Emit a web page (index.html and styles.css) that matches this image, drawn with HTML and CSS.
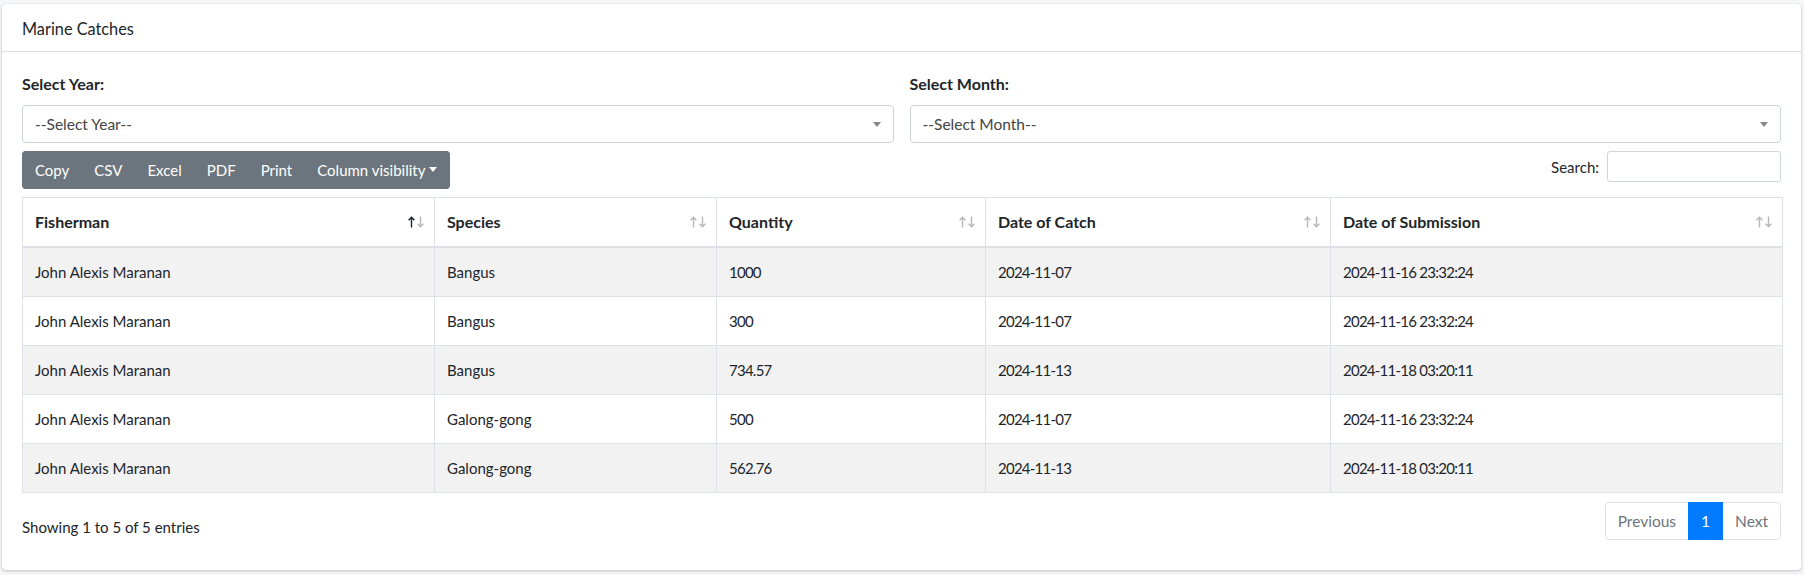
FILE: index.html
```html
<!DOCTYPE html>
<html lang="en">
<head>
<meta charset="utf-8">
<title>Marine Catches</title>
<link rel="stylesheet" href="styles.css">
</head>
<body>
<div class="card">
  <div class="card-header">
    <h3 class="card-title">Marine Catches</h3>
  </div>
  <div class="card-body">
    <div class="filters">
      <div class="field">
        <label class="field-label">Select Year:</label>
        <div class="select"><span class="select-text">--Select Year--</span><span class="select-arrow"></span></div>
      </div>
      <div class="field">
        <label class="field-label">Select Month:</label>
        <div class="select"><span class="select-text">--Select Month--</span><span class="select-arrow"></span></div>
      </div>
    </div>
    <div class="toolbar">
      <div class="btn-group">
        <button class="btn">Copy</button>
        <button class="btn">CSV</button>
        <button class="btn">Excel</button>
        <button class="btn">PDF</button>
        <button class="btn">Print</button>
        <button class="btn dropdown-toggle">Column visibility</button>
      </div>
      <label class="search">Search:<input class="search-input" type="search"></label>
    </div>
    <table class="data-table">
      <colgroup>
        <col class="c1"><col class="c2"><col class="c3"><col class="c4"><col class="c5">
      </colgroup>
      <thead>
        <tr>
          <th>Fisherman<svg class="sort" width="17" height="12" viewBox="0 0 17 12"><path class="up active" d="M3.5 11.5V1.2M0.6 4.3L3.5 1.2L6.4 4.3"/><path class="down" d="M12.5 0.5V10.8M9.6 7.7L12.5 10.8L15.4 7.7"/></svg></th>
          <th>Species<svg class="sort" width="17" height="12" viewBox="0 0 17 12"><path class="up" d="M3.5 11.5V1.2M0.6 4.3L3.5 1.2L6.4 4.3"/><path class="down" d="M12.5 0.5V10.8M9.6 7.7L12.5 10.8L15.4 7.7"/></svg></th>
          <th>Quantity<svg class="sort" width="17" height="12" viewBox="0 0 17 12"><path class="up" d="M3.5 11.5V1.2M0.6 4.3L3.5 1.2L6.4 4.3"/><path class="down" d="M12.5 0.5V10.8M9.6 7.7L12.5 10.8L15.4 7.7"/></svg></th>
          <th>Date of Catch<svg class="sort" width="17" height="12" viewBox="0 0 17 12"><path class="up" d="M3.5 11.5V1.2M0.6 4.3L3.5 1.2L6.4 4.3"/><path class="down" d="M12.5 0.5V10.8M9.6 7.7L12.5 10.8L15.4 7.7"/></svg></th>
          <th>Date of Submission<svg class="sort" width="17" height="12" viewBox="0 0 17 12"><path class="up" d="M3.5 11.5V1.2M0.6 4.3L3.5 1.2L6.4 4.3"/><path class="down" d="M12.5 0.5V10.8M9.6 7.7L12.5 10.8L15.4 7.7"/></svg></th>
        </tr>
      </thead>
      <tbody>
        <tr class="odd"><td>John Alexis Maranan</td><td>Bangus</td><td class="num">1000</td><td class="num">2024-11-07</td><td class="num">2024-11-16 23:32:24</td></tr>
        <tr><td>John Alexis Maranan</td><td>Bangus</td><td class="num">300</td><td class="num">2024-11-07</td><td class="num">2024-11-16 23:32:24</td></tr>
        <tr class="odd"><td>John Alexis Maranan</td><td>Bangus</td><td class="num">734.57</td><td class="num">2024-11-13</td><td class="num">2024-11-18 03:20:11</td></tr>
        <tr><td>John Alexis Maranan</td><td>Galong-gong</td><td class="num">500</td><td class="num">2024-11-07</td><td class="num">2024-11-16 23:32:24</td></tr>
        <tr class="odd"><td>John Alexis Maranan</td><td>Galong-gong</td><td class="num">562.76</td><td class="num">2024-11-13</td><td class="num">2024-11-18 03:20:11</td></tr>
      </tbody>
    </table>
    <div class="table-footer">
      <div class="info">Showing 1 to 5 of 5 entries</div>
      <ul class="pagination">
        <li class="page-item disabled"><span class="page-link">Previous</span></li>
        <li class="page-item active"><span class="page-link">1</span></li>
        <li class="page-item disabled"><span class="page-link">Next</span></li>
      </ul>
    </div>
  </div>
</div>
</body>
</html>
```

FILE: styles.css
```css
* { box-sizing: border-box; }

html, body {
  margin: 0;
  padding: 0;
}

body {
  background: #f4f6f9;
  font-family: "Lato", "Liberation Sans", sans-serif;
  font-size: 15px;
  line-height: 24px;
  color: #212529;
}

.card {
  margin: 4px 3px 5px 2px;
  background: #fff;
  border-radius: 4px;
  box-shadow: 0 0 1px rgba(0,0,0,.125), 0 1px 3px rgba(0,0,0,.2);
}

.card-header {
  padding: 12px 20px;
  border-bottom: 1px solid rgba(0,0,0,.125);
}

.card-title {
  margin: 0;
  font-size: 16.3px;
  line-height: 23px;
  font-weight: 400;
  padding-top: 1px;
  margin-bottom: -1px;
}

.card-body {
  padding: 20px 20px 20px;
}

.filters {
  display: grid;
  grid-template-columns: 1fr 1fr;
  column-gap: 16px;
  margin-bottom: 8px;
}

.field-label {
  display: block;
  font-size: 16px;
  font-weight: 700;
  margin-bottom: 9px;
}

.select {
  position: relative;
  height: 38px;
  border: 1px solid #ced4da;
  border-radius: 4px;
  background: #fff;
  display: flex;
  align-items: center;
  padding: 0 12px;
}

.select-text {
  color: #444;
  font-size: 15.5px;
}

.select-arrow {
  position: absolute;
  right: 12px;
  top: 16px;
  width: 0;
  height: 0;
  border-style: solid;
  border-width: 5px 4px 0 4px;
  border-color: #888 transparent transparent transparent;
}

.toolbar {
  display: flex;
  justify-content: space-between;
  align-items: flex-start;
  margin-bottom: 8px;
}

.btn-group {
  display: flex;
  background: #6c757d;
  border-radius: 4px;
}

.btn {
  font-family: inherit;
  font-size: 15px;
  line-height: 24px;
  color: #fff;
  background: #6c757d;
  border: 1px solid #6c757d;
  padding: 6px 12px;
  margin: 0;
  border-radius: 4px;
  cursor: pointer;
}

.btn + .btn {
  margin-left: -1px;
}

.dropdown-toggle::after {
  content: "";
  display: inline-block;
  margin-left: 4px;
  vertical-align: 4px;
  border-top: 5px solid;
  border-right: 4.5px solid transparent;
  border-left: 4.5px solid transparent;
}

.search {
  display: flex;
  align-items: center;
  gap: 8px;
  height: 31px;
}

.search-input {
  width: 174px;
  height: 31px;
  border: 1px solid #ced4da;
  border-radius: 3px;
  padding: 4px 8px;
  font-family: inherit;
  font-size: 14px;
}

.data-table {
  width: calc(100% + 2px);
  table-layout: fixed;
  border-collapse: collapse;
  border: 1px solid #dee2e6;
}

.c1 { width: 412px; }
.c2 { width: 282px; }
.c3 { width: 269px; }
.c4 { width: 345px; }

.data-table th,
.data-table td {
  border: 1px solid #dee2e6;
  padding: 12px;
  text-align: left;
  height: 48px;
  white-space: nowrap;
}

.data-table th {
  position: relative;
  font-size: 16px;
  font-weight: 700;
  padding-right: 30px;
  border-bottom: 2px solid #dee2e6;
}

.data-table td.num {
  letter-spacing: -0.75px;
}

.sort {
  position: absolute;
  right: 9px;
  top: 18px;
  fill: none;
  stroke-width: 1.4;
}

.sort path {
  stroke: #b8b8b8;
}

.sort path.active {
  stroke: #212529;
}

.data-table tr.odd td {
  background: #f2f2f2;
}

.table-footer {
  display: flex;
  justify-content: space-between;
  align-items: flex-start;
  margin-top: 9px;
  padding-bottom: 10px;
}

.info {
  padding-top: 13px;
}

.pagination {
  display: flex;
  list-style: none;
  margin: 0;
  padding: 0;
}

.page-link {
  display: block;
  padding: 8px 12px;
  line-height: 20px;
  font-size: 15.5px;
  border: 1px solid #dee2e6;
  color: #6c757d;
  background: #fff;
}

.page-item + .page-item .page-link {
  margin-left: -1px;
}

.page-item:first-child .page-link {
  border-radius: 4px 0 0 4px;
}

.page-item:last-child .page-link {
  border-radius: 0 4px 4px 0;
}

.page-item.active .page-link {
  background: #007bff;
  border-color: #007bff;
  color: #fff;
  position: relative;
}
```
